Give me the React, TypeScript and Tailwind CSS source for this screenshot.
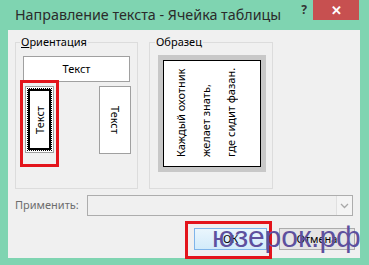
import React from "react";

const font = { fontFamily: '"Noto Sans", "Open Sans", sans-serif' };

export default function App() {
  return (
    <div className="relative w-[369px] h-[265px] bg-[#7fd4b1] flex flex-col overflow-hidden" style={font}>
      {/* Title bar */}
      <div className="h-[30px] flex items-start shrink-0">
        <div className="pl-[15px] pt-[5px] text-[14.3px] leading-[20px] text-[#2b2b2b] flex-1 whitespace-nowrap">
          Направление текста - Ячейка таблицы
        </div>
        <div className="pt-[3px] pr-[6px] text-[12px] font-bold text-[#333] leading-[14px]">?</div>
        <div className="w-[46px] h-[20px] mr-[10px] bg-[#c75050] flex items-center justify-center text-white text-[13px] font-bold leading-none">
          ✕
        </div>
      </div>

      {/* Body */}
      <div className="ml-[8px] mr-[9px] mb-[7px] flex-1 bg-[#f0f0f0] flex flex-col text-[11px] text-black">
        <div className="flex pl-[7px] pt-[12px] gap-[11px]">
          {/* Orientation group */}
          <div className="relative w-[123px] h-[147px] border border-[#dcdcdc]">
            <div className="absolute left-[4px] top-[-9px] px-[1px] bg-[#f0f0f0] leading-[16px]">
              <span className="underline">О</span>риентация
            </div>
            <div className="flex flex-col pl-[7px] pt-[13px]">
              <div className="w-[107px] h-[26px] bg-white border border-[#a0a0a0] flex items-center justify-center">
                Текст
              </div>
              <div className="flex mt-[4px] pl-[2px]">
                <div className="w-[29px] h-[67px] border border-[#a0a0a0] bg-white p-[1px]">
                  <div className="w-full h-full border border-dotted border-black">
                    <div className="w-full h-full border-2 border-black bg-white flex items-center justify-center">
                      <span className="[writing-mode:vertical-rl] rotate-180 leading-[14px]">Текст</span>
                    </div>
                  </div>
                </div>
                <div className="ml-[45px] w-[32px] h-[68px] bg-white border border-[#a0a0a0] flex items-center justify-center">
                  <span className="[writing-mode:vertical-rl] leading-[14px]">Текст</span>
                </div>
              </div>
            </div>
          </div>

          {/* Sample group */}
          <div className="relative w-[124px] h-[147px] border border-[#dcdcdc]">
            <div className="absolute left-[5px] top-[-9px] px-[1px] bg-[#f0f0f0] leading-[16px]">Образец</div>
            <div className="ml-[8px] mt-[12px] w-[108px] h-[117px] bg-[#c8c8c8] p-[5px]">
              <div className="w-full h-full bg-white border border-black overflow-hidden">
                <div className="w-full h-full [writing-mode:vertical-rl] rotate-180 leading-[25px] pr-[4px] pt-[9px] text-[11px] whitespace-nowrap">
                  <div>Каждый охотник</div>
                  <div>желает знать,</div>
                  <div>где сидит фазан.</div>
                </div>
              </div>
            </div>
          </div>
        </div>

        {/* Apply row */}
        <div className="flex items-center mt-[6px] pl-[7px]">
          <div className="w-[72px] text-[#6d6d6d]">Применить:</div>
          <div className="w-[266px] h-[21px] border border-[#adadad] bg-[#f0f0f0] flex justify-end">
            <div className="w-[16px] h-full bg-[#f4f4f4] border-l border-[#e0e0e0] flex items-center justify-center">
              <svg width="9" height="6" viewBox="0 0 9 6">
                <path d="M1 1 L4.5 4.5 L8 1" stroke="#a8a8a8" strokeWidth="1.3" fill="none" />
              </svg>
            </div>
          </div>
        </div>

        {/* Buttons */}
        <div className="flex justify-end gap-[12px] mt-[12px] pr-[5px]">
          <div className="w-[73px] h-[22px] border border-[#7eb4ea] bg-gradient-to-b from-[#eaf6fd] to-[#d2ebfa] flex items-center justify-center">
            ОК
          </div>
          <div className="w-[76px] h-[22px] border border-[#acacac] bg-[#e5e5e5] flex items-center justify-center">
            Отмена
          </div>
        </div>
      </div>

      {/* Red annotation frames */}
      <div className="absolute left-[20px] top-[80px] w-[39px] h-[87px] border-[3px] border-[#e3141b]" />
      <div className="absolute left-[185px] top-[221px] w-[87px] h-[38px] border-[3px] border-[#e3141b]" />

      {/* Watermark */}
      <div
        className="absolute left-[212px] top-[222px] text-[30px] leading-[30px] text-[#5d509e] whitespace-nowrap"
        style={{ fontFamily: '"Liberation Sans", Arial, sans-serif' }}
      >
        юзерок.рф
      </div>
    </div>
  );
}
